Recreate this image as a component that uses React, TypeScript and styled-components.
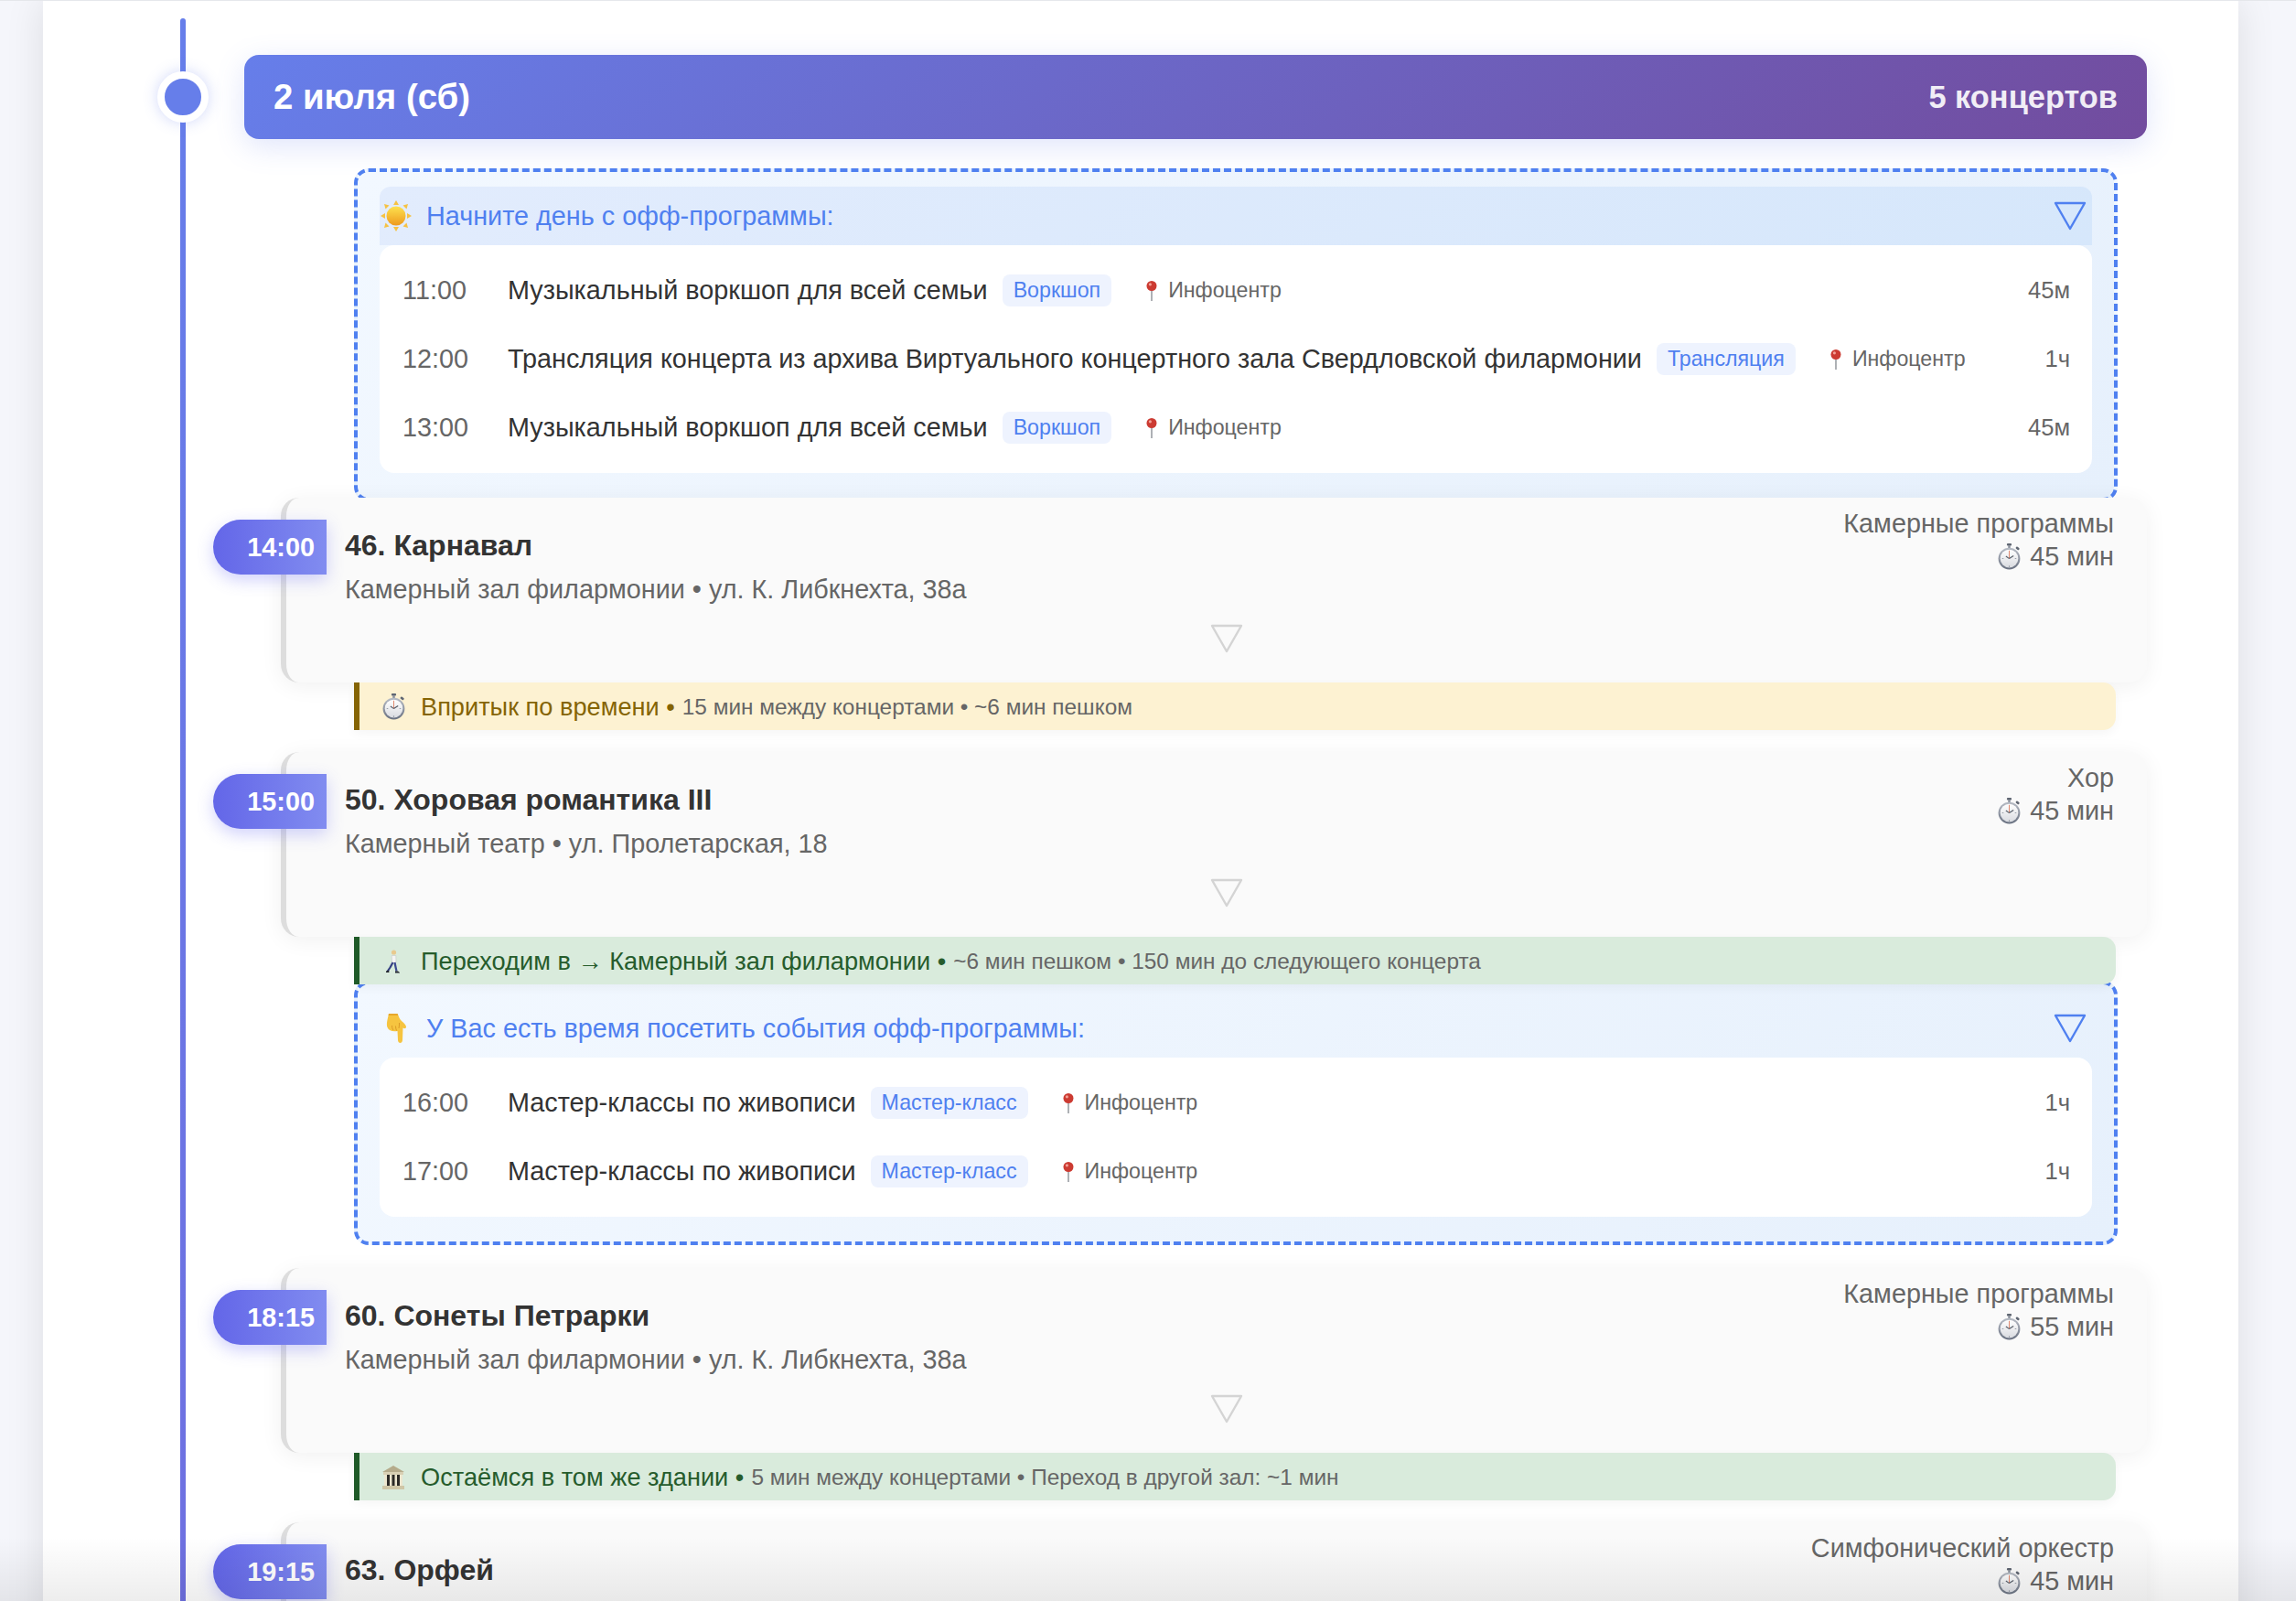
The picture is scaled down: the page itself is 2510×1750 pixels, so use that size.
import * as React from 'react'
import styled, { createGlobalStyle } from 'styled-components'

const Global = createGlobalStyle`
  html, body { margin: 0; padding: 0; }
  body { font-family: "Liberation Sans", Arial, sans-serif; background: #f5f6fb; }
`

const Page = styled.div`
  position: relative;
  height: 1750px;
  overflow: hidden;
  border-top: 1px solid #e5e7eb;
  box-sizing: border-box;
`
const Sheet = styled.main`
  position: relative;
  width: 2400px;
  min-height: 1900px;
  margin-left: 47px;
  padding: 59px 100px 0 220px;
  box-sizing: border-box;
  background: #fff;
  box-shadow: 0 0 40px rgba(0, 0, 0, 0.1);
`
const Fade = styled.div`
  position: absolute;
  left: 0;
  right: 0;
  bottom: 0;
  height: 70px;
  z-index: 5;
  background: linear-gradient(to bottom, rgba(0, 0, 0, 0), rgba(0, 0, 0, 0.07));
  pointer-events: none;
`
const Line = styled.div`
  position: absolute;
  left: 150px;
  top: 19px;
  bottom: 0;
  width: 6px;
  border-radius: 3px;
  background: linear-gradient(to bottom, #667eea, #6f6fe0);
`
const DayHeader = styled.header`
  position: relative;
  display: flex;
  align-items: center;
  justify-content: space-between;
  height: 92px;
  padding: 0 32px;
  margin-bottom: 32px;
  box-sizing: border-box;
  border-radius: 16px;
  color: #fff;
  background: linear-gradient(135deg, #667eea 0%, #724c9e 100%);
  box-shadow: 0 8px 32px rgba(102, 126, 234, 0.2);
`
const DayDot = styled.span`
  position: absolute;
  left: -95px;
  top: 18px;
  width: 40px;
  height: 40px;
  border: 8px solid #fff;
  border-radius: 50%;
  background: #667eea;
  box-shadow: 0 0 16px rgba(102, 126, 234, 0.3);
`
const DayTitle = styled.h2`
  margin: 0;
  font-size: 38.4px;
  font-weight: 700;
`
const DayCount = styled.span`
  font-size: 34.4px;
  font-weight: 700;
  opacity: 0.9;
`
const Content = styled.div`
  display: flex;
  flex-direction: column;
  margin-left: 40px;
`
const OffBlock = styled.section<{ $first?: boolean }>`
  position: relative;
  margin: ${p => (p.$first ? '0 32px -4px 80px' : '-4px 32px 25px 80px')};
  padding: 16px 24px 27px;
  border: 4px dashed #4f80f0;
  border-radius: 16px;
  background: linear-gradient(135deg, #f2f8ff 0%, #e6f0fc 100%);
`
const OffHeader = styled.div<{ $open?: boolean }>`
  display: flex;
  align-items: center;
  height: 64px;
  border-radius: 12px 12px 0 0;
  background: ${p => (p.$open ? 'linear-gradient(135deg, #e2ecfd, #d6e7fb)' : 'transparent')};
`
const OffIcon = styled.span`
  display: flex;
  justify-content: center;
  flex: 0 0 36px;
  margin-right: 15px;
`
const OffTitle = styled.span`
  flex: 1;
  font-size: 28.8px;
  color: #4f80f0;
`
const Chevron = styled.svg`
  width: 36px;
  height: 32px;
  margin-right: 6px;
  flex: none;
`
const EventList = styled.div`
  padding: 12px 24px 12px 25px;
  border-radius: 16px;
  background: #fff;
`
const EventRow = styled.div`
  display: flex;
  align-items: center;
  height: 75px;
`
const EventTime = styled.span`
  flex: 0 0 115px;
  font-size: 28.8px;
  color: #666;
`
const EventName = styled.span`
  font-size: 28.8px;
  color: #333;
`
const EventTag = styled.span`
  margin-left: 16px;
  padding: 0 12px;
  height: 35px;
  line-height: 35px;
  border-radius: 8px;
  font-size: 23.2px;
  color: #4f80f0;
  background: #eef3fe;
`
const EventPlace = styled.span`
  display: flex;
  align-items: center;
  gap: 11px;
  margin-left: 37px;
  font-size: 23.2px;
  color: #666;
`
const EventLength = styled.span`
  margin-left: auto;
  font-size: 25.6px;
  color: #666;
`
const Card = styled.article`
  position: relative;
  z-index: 1;
  height: 202px;
  padding: 0 36px 0 64px;
  box-sizing: border-box;
  border-left: 6px solid #ddd;
  border-radius: 20px;
  background: #fafafa;
  box-shadow: 0 4px 24px rgba(0, 0, 0, 0.06);
`
const TimeBadge = styled.span`
  position: absolute;
  left: -80px;
  top: 24px;
  width: 124px;
  height: 60px;
  padding-right: 13px;
  box-sizing: border-box;
  display: flex;
  align-items: center;
  justify-content: flex-end;
  border-radius: 30px 0 0 30px;
  font-size: 28.8px;
  font-weight: 700;
  color: #fff;
  background: linear-gradient(90deg, #6366e8, #818cf0);
  box-shadow: 0 6px 18px rgba(99, 102, 241, 0.3);
`
const CardTop = styled.div`
  display: flex;
  justify-content: space-between;
  height: 118px;
`
const CardInfo = styled.div`
  padding-top: 32px;
`
const CardTitle = styled.h3`
  margin: 0 0 10px;
  font-size: 32px;
  line-height: 40px;
  font-weight: 700;
  color: #333;
`
const CardPlace = styled.div`
  font-size: 28.8px;
  line-height: 36px;
  color: #666;
`
const CardMeta = styled.div`
  padding-top: 10px;
  text-align: right;
  font-size: 28.8px;
  line-height: 36px;
  color: #666;
`
const MetaLength = styled.div`
  display: flex;
  align-items: center;
  justify-content: flex-end;
  gap: 10px;
`
const CardToggle = styled.div`
  display: flex;
  justify-content: center;
  margin-top: 20px;
`
const Note = styled.div<{ $tone: 'warn' | 'ok' }>`
  position: relative;
  z-index: 1;
  display: flex;
  align-items: center;
  height: 52px;
  margin: 0 34px 0 80px;
  padding: 1px 0 0 24px;
  box-sizing: border-box;
  border-left: 6px solid ${p => (p.$tone === 'warn' ? '#856404' : '#1f5a28')};
  border-radius: 0 14px 14px 0;
  background: ${p => (p.$tone === 'warn' ? '#fdf2d2' : '#d9ebdc')};
  box-shadow: 0 4px 12px rgba(0, 0, 0, 0.04);
`
const NoteGap = styled.div`
  height: 24px;
`
const NoteIcon = styled.span`
  display: flex;
  justify-content: center;
  flex: 0 0 26px;
  margin-right: 17px;
`
const NoteTitle = styled.span<{ $tone: 'warn' | 'ok' }>`
  font-size: 27.2px;
  color: ${p => (p.$tone === 'warn' ? '#856404' : '#265c2c')};
`
const NoteText = styled.span`
  margin-left: 8px;
  font-size: 24.4px;
  color: #666;
`

const Triangle = ({ color }: { color: string }) => (
  <Chevron viewBox="0 0 36 32">
    <path d="M2 2 L34 2 L18 30 Z" fill="none" stroke={color} strokeWidth="2.4" strokeLinejoin="round" />
  </Chevron>
)

const Sun = () => (
  <svg width="36" height="36" viewBox="0 0 36 36">
    <defs>
      <linearGradient id="sunFill" x1="0" y1="0" x2="0" y2="1">
        <stop offset="0" stopColor="#fde24f" />
        <stop offset="1" stopColor="#ee9a1e" />
      </linearGradient>
    </defs>
    <circle cx="18" cy="18" r="10.5" fill="url(#sunFill)" />
    <g fill="#f6c244">
      <path d="M18 1 L21 6 H15 Z" />
      <path d="M18 35 L21 30 H15 Z" />
      <path d="M1 18 L6 15 V21 Z" />
      <path d="M35 18 L30 15 V21 Z" />
      <path d="M5 5 L10.5 6.5 L6.5 10.5 Z" />
      <path d="M31 5 L25.5 6.5 L29.5 10.5 Z" />
      <path d="M5 31 L10.5 29.5 L6.5 25.5 Z" />
      <path d="M31 31 L25.5 29.5 L29.5 25.5 Z" />
    </g>
  </svg>
)

const Hand = () => (
  <svg width="24" height="34" viewBox="0 0 24 34">
    <path d="M4 1 H13.5 C15 4 15.5 6 17 8 C19 10 23 13 23 15.5 C23 17.5 21 17.5 19.5 16.5 L19 30 C18.8 34 14.2 34 14 30 L13.5 20 C9 21 4 20 2.5 16 C1 12 3 6 4 1 Z" fill="#f6c440" />
    <path d="M4 1 H13.5 L14.2 3 H3.6 Z" fill="#e7a72c" />
    <path d="M7.5 14 C7.5 16 8 18 9 19 M11.5 14.5 C11.5 16.5 12 18 12.5 19.5 M15.5 11 C15.5 13 15.5 15 15 17" stroke="#dc9a26" strokeWidth="1" fill="none" />
  </svg>
)

const Watch = () => (
  <svg width="25" height="29" viewBox="0 0 24 28">
    <defs>
      <linearGradient id="watchRing" x1="0" y1="0" x2="0" y2="1">
        <stop offset="0" stopColor="#b8bdc6" />
        <stop offset="1" stopColor="#687080" />
      </linearGradient>
      <linearGradient id="watchFace" x1="0" y1="0" x2="0" y2="1">
        <stop offset="0" stopColor="#ffffff" />
        <stop offset="1" stopColor="#d9dbe0" />
      </linearGradient>
    </defs>
    <rect x="9.5" y="0" width="5" height="2.5" rx="1" fill="#5f6672" />
    <rect x="10.8" y="2" width="2.4" height="3" fill="#8a909c" />
    <rect x="19" y="4" width="4" height="2.5" rx="1" fill="#5f6672" transform="rotate(40 21 5)" />
    <circle cx="12" cy="16" r="11.5" fill="url(#watchRing)" />
    <circle cx="12" cy="16" r="9.5" fill="url(#watchFace)" />
    <path d="M12 16 L12 7.5" stroke="#e08a70" strokeWidth="1" />
    <path d="M12 16 L16.5 13" stroke="#555b66" strokeWidth="1.1" />
    <path d="M12 16 L8.5 13.5" stroke="#555b66" strokeWidth="1" />
    <path d="M12 23.5 V25 M4.5 16 H6 M18 16 H19.5" stroke="#9aa0aa" strokeWidth="1" />
  </svg>
)

const Pin = () => (
  <svg width="14" height="24" viewBox="0 0 14 24">
    <path d="M7 10 V23" stroke="#9a9ea3" strokeWidth="1.6" />
    <circle cx="7" cy="6.5" r="5.5" fill="#cc3b32" />
    <circle cx="5.4" cy="4.8" r="1.6" fill="#f2a197" />
  </svg>
)

const Walker = () => (
  <svg width="16" height="26" viewBox="0 0 16 26">
    <circle cx="8.5" cy="3" r="2.6" fill="#e8c98f" />
    <path d="M6.2 6.5 H10.8 L11 14.5 H6.5 Z" fill="#f4f4f4" stroke="#c0c0c0" strokeWidth="0.5" />
    <path d="M7.5 14 L4.5 19.5 L1.8 23.5" fill="none" stroke="#343f82" strokeWidth="2.2" strokeLinejoin="round" />
    <path d="M9.5 14 L10.5 19 L11.5 23.5" fill="none" stroke="#3d4a92" strokeWidth="2.2" strokeLinejoin="round" />
    <path d="M0 23.5 L3 22.5 L3.5 25 H0 Z M10 23.5 H13 L15 25 V25.5 H10 Z" fill="#23262e" />
  </svg>
)

const Museum = () => (
  <svg width="26" height="28" viewBox="0 0 26 28">
    <path d="M13 1 L25 8 H1 Z" fill="#b5ab8b" />
    <rect x="2" y="8" width="22" height="3" fill="#d8d0b4" />
    <rect x="3" y="11" width="20" height="12" fill="#ece6cf" />
    <rect x="6" y="11" width="3" height="12" fill="#2c2a26" />
    <rect x="11.5" y="11" width="3" height="12" fill="#2c2a26" />
    <rect x="17" y="11" width="3" height="12" fill="#2c2a26" />
    <rect x="1" y="23" width="24" height="4" fill="#cfc6a6" />
  </svg>
)

type OffEvent = { time: string; name: string; tag: string; length: string }

const OffProgram = ({ first, icon, title, events }: { first?: boolean; icon: React.ReactNode; title: string; events: OffEvent[] }) => (
  <OffBlock $first={first}>
    <OffHeader $open={first}>
      <OffIcon>{icon}</OffIcon>
      <OffTitle>{title}</OffTitle>
      <Triangle color="#4f80f0" />
    </OffHeader>
    <EventList>
      {events.map(e => (
        <EventRow key={e.time}>
          <EventTime>{e.time}</EventTime>
          <EventName>{e.name}</EventName>
          <EventTag>{e.tag}</EventTag>
          <EventPlace><Pin />Инфоцентр</EventPlace>
          <EventLength>{e.length}</EventLength>
        </EventRow>
      ))}
    </EventList>
  </OffBlock>
)

const Concert = ({ time, title, place, genre, length }: { time: string; title: string; place?: string; genre: string; length: string }) => (
  <Card>
    <TimeBadge>{time}</TimeBadge>
    <CardTop>
      <CardInfo>
        <CardTitle>{title}</CardTitle>
        {place && <CardPlace>{place}</CardPlace>}
      </CardInfo>
      <CardMeta>
        <div>{genre}</div>
        <MetaLength><Watch />{length}</MetaLength>
      </CardMeta>
    </CardTop>
    <CardToggle><Triangle color="#d4d4d4" /></CardToggle>
  </Card>
)

const Transfer = ({ tone, icon, title, text }: { tone: 'warn' | 'ok'; icon: React.ReactNode; title: string; text: string }) => (
  <Note $tone={tone}>
    <NoteIcon>{icon}</NoteIcon>
    <NoteTitle $tone={tone}>{title}</NoteTitle>
    <NoteText>{text}</NoteText>
  </Note>
)

const workshop = 'Музыкальный воркшоп для всей семьи'
const philharmonic = 'Камерный зал филармонии • ул. К. Либкнехта, 38а'

export default function App() {
  return (
    <Page>
      <Global />
      <Sheet>
        <Line />
        <DayHeader>
          <DayDot />
          <DayTitle>2 июля (сб)</DayTitle>
          <DayCount>5 концертов</DayCount>
        </DayHeader>
        <Content>
          <OffProgram
            first
            icon={<Sun />}
            title="Начните день с офф-программы:"
            events={[
              { time: '11:00', name: workshop, tag: 'Воркшоп', length: '45м' },
              { time: '12:00', name: 'Трансляция концерта из архива Виртуального концертного зала Свердловской филармонии', tag: 'Трансляция', length: '1ч' },
              { time: '13:00', name: workshop, tag: 'Воркшоп', length: '45м' },
            ]}
          />
          <Concert time="14:00" title="46. Карнавал" place={philharmonic} genre="Камерные программы" length="45 мин" />
          <Transfer tone="warn" icon={<Watch />} title="Впритык по времени •" text="15 мин между концертами • ~6 мин пешком" />
          <NoteGap />
          <Concert time="15:00" title="50. Хоровая романтика III" place="Камерный театр • ул. Пролетарская, 18" genre="Хор" length="45 мин" />
          <Transfer tone="ok" icon={<Walker />} title="Переходим в → Камерный зал филармонии •" text="~6 мин пешком • 150 мин до следующего концерта" />
          <OffProgram
            icon={<Hand />}
            title="У Вас есть время посетить события офф-программы:"
            events={[
              { time: '16:00', name: 'Мастер-классы по живописи', tag: 'Мастер-класс', length: '1ч' },
              { time: '17:00', name: 'Мастер-классы по живописи', tag: 'Мастер-класс', length: '1ч' },
            ]}
          />
          <Concert time="18:15" title="60. Сонеты Петрарки" place={philharmonic} genre="Камерные программы" length="55 мин" />
          <Transfer tone="ok" icon={<Museum />} title="Остаёмся в том же здании •" text="5 мин между концертами • Переход в другой зал: ~1 мин" />
          <NoteGap />
          <Concert time="19:15" title="63. Орфей" genre="Симфонический оркестр" length="45 мин" />
        </Content>
      </Sheet>
      <Fade />
    </Page>
  )
}
